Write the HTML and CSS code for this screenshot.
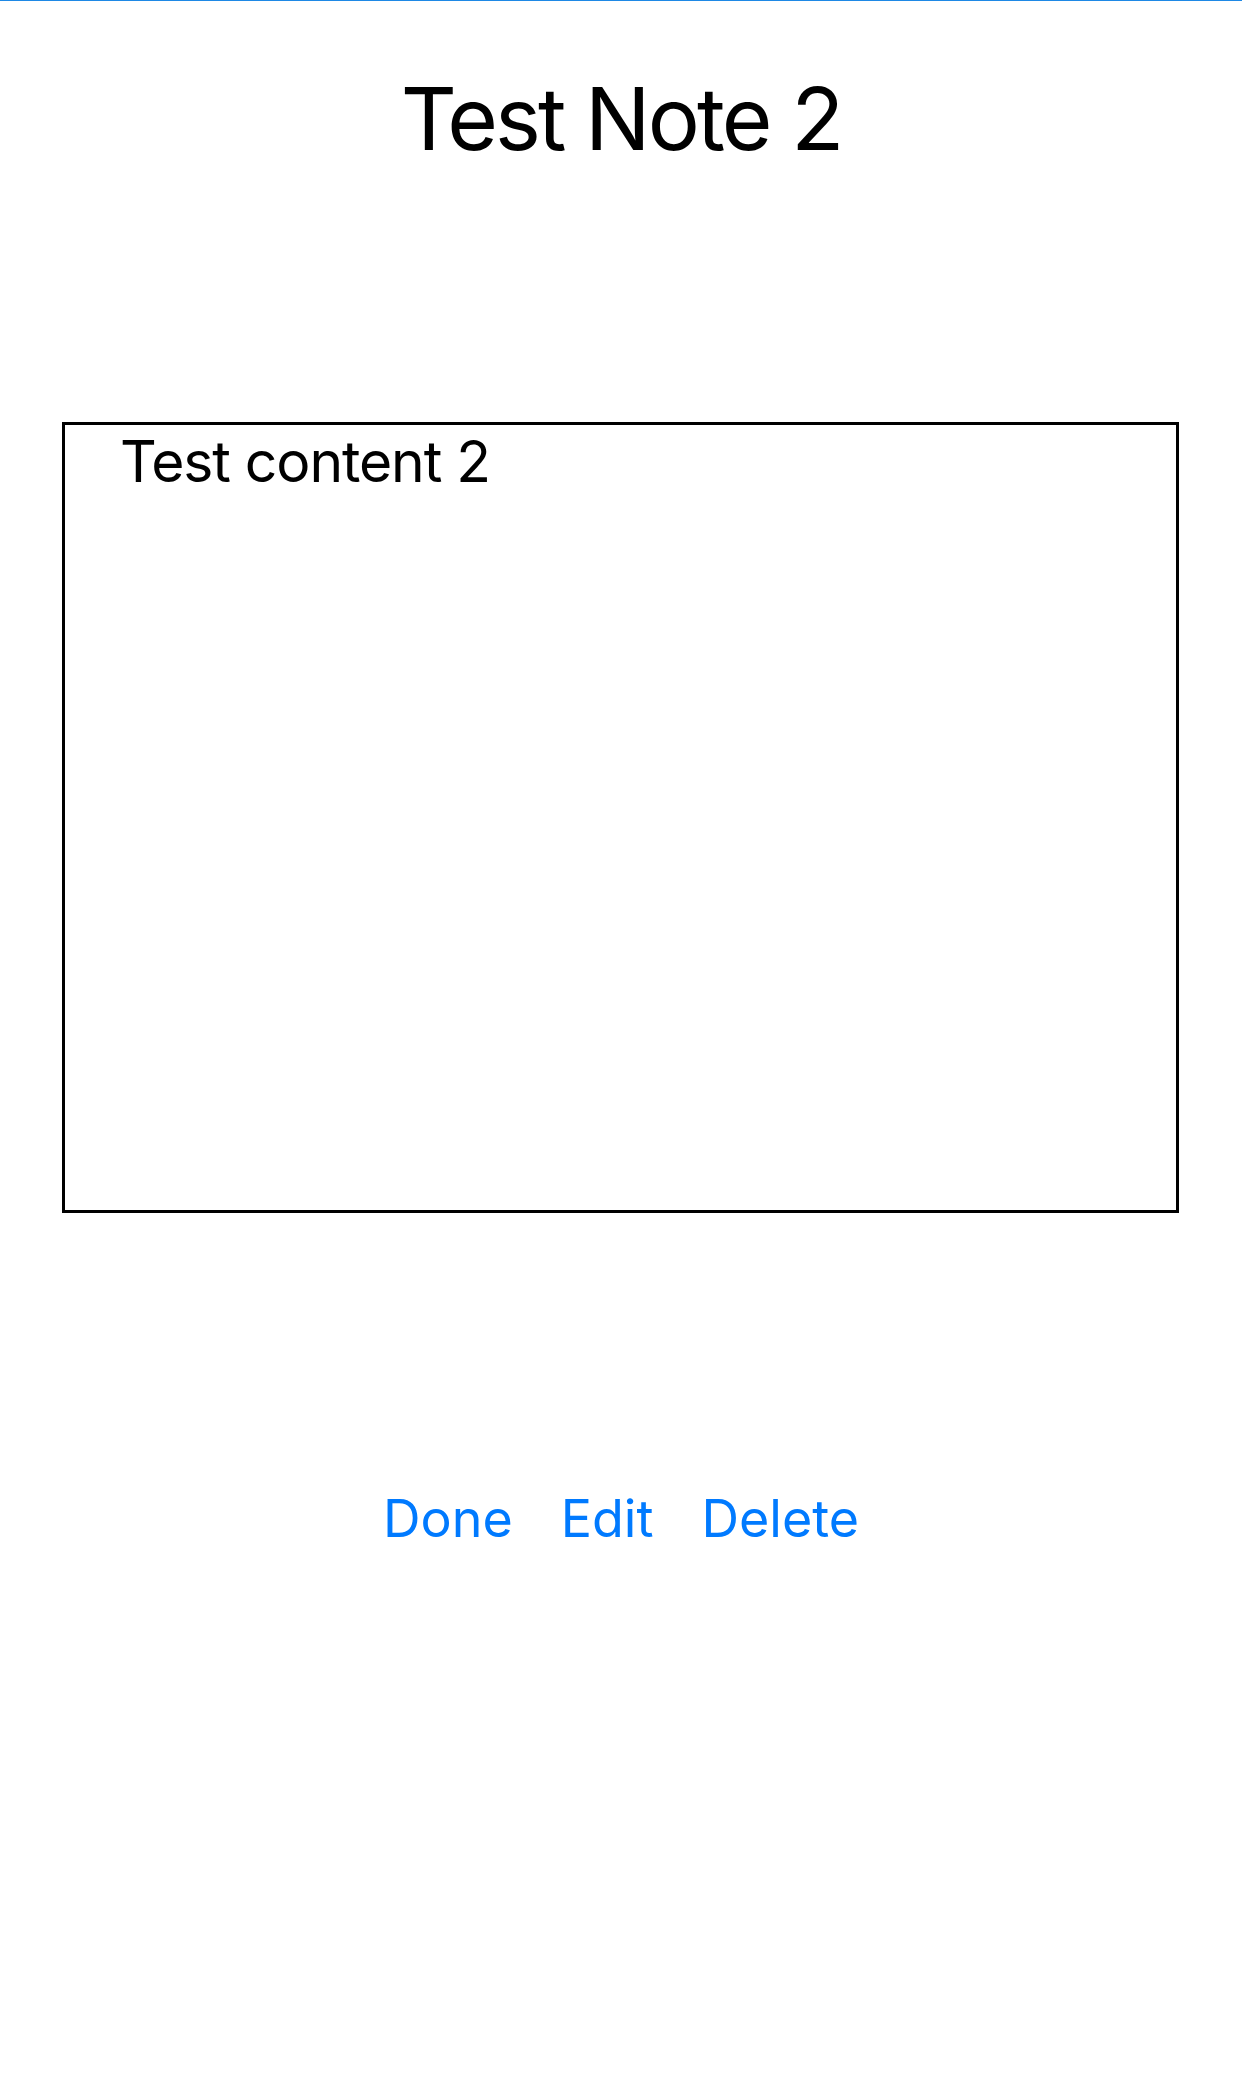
FILE: index.html
```html
<!DOCTYPE html>
<html lang="en">
<head>
<meta charset="utf-8">
<title>Test Note 2</title>
<link rel="stylesheet" href="styles.css">
</head>
<body>
<div class="top-line"></div>
<main class="note-screen">
  <h1 class="note-title">Test Note 2</h1>
  <div class="note-box">
    <p class="note-text">Test content 2</p>
  </div>
  <nav class="note-actions">
    <button class="action-btn" type="button">Done</button>
    <button class="action-btn" type="button">Edit</button>
    <button class="action-btn" type="button">Delete</button>
  </nav>
</main>
</body>
</html>
```
FILE: styles.css
```css
html, body {
  margin: 0;
  padding: 0;
  background: #ffffff;
}

body {
  font-family: Inter, "Noto Sans", "Liberation Sans", sans-serif;
  color: #000000;
  width: 1242px;
  height: 2089px;
  overflow: hidden;
}

.top-line {
  height: 1px;
  background: #1e88e5;
}

.note-screen {
  display: flex;
  flex-direction: column;
}

.note-title {
  margin: 74px 0 0 0;
  font-size: 87px;
  line-height: 1;
  font-weight: 400;
  text-align: center;
  letter-spacing: -2.9px;
}

.note-box {
  box-sizing: border-box;
  margin: 260px 0 0 62px;
  width: 1117px;
  height: 791px;
  border: 3px solid #000000;
  padding: 8px 0 0 55px;
}

.note-text {
  margin: 0;
  font-size: 57px;
  line-height: 1;
  font-weight: 400;
  letter-spacing: -1.1px;
}

.note-actions {
  display: flex;
  justify-content: center;
  gap: 48px;
  margin-top: 280px;
}

.action-btn {
  font-family: inherit;
  font-size: 52px;
  line-height: 1;
  font-weight: 400;
  color: #007aff;
  background: none;
  border: none;
  padding: 0;
  margin: 0;
  cursor: pointer;
}
```
